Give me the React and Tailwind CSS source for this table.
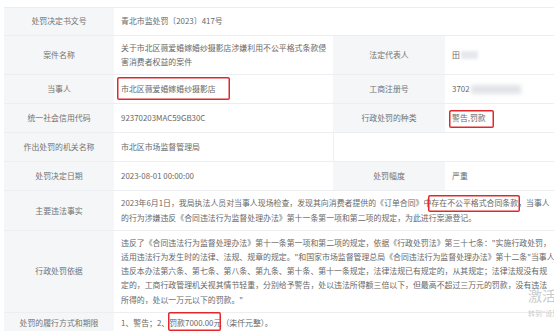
import React from 'react';

const Label = ({ children, className = 'min-h-[29px]' }) => (
  <div className={`flex items-center justify-center text-center bg-[#f5f6f7] border-b border-[#eceef1] text-[#737373] px-1 ${className}`}>
    {children}
  </div>
);

const Value = ({ children, className = '', pad = 'py-[5px] min-h-[29px]' }) => (
  <div className={`flex items-center bg-white border-b border-[#eceef1] text-[#686868] px-[7px] ${pad} ${className}`}>
    <div>{children}</div>
  </div>
);

// red annotation rectangle drawn over a piece of text
const Mark = ({ children, box }) => (
  <span className="relative inline-block">
    {children}
    <span className={`absolute rounded-[2px] shadow-[inset_0_0_0_1.5px_#e3262c] pointer-events-none ${box}`} />
  </span>
);

const Line = ({ children }) => <div className="whitespace-nowrap">{children}</div>;

export default function App() {
  return (
    <div className="relative w-[554px] h-[331px] overflow-hidden bg-white font-['Noto_Sans_CJK_SC',sans-serif] text-[7.9px] leading-[14.2px]">
      <div className="ml-[4px] mt-[7px] w-[556px] grid grid-cols-[110px_219px_112px_1fr] border-t border-[#eceef1]">
        <Label className="min-h-[28px]">处罚决定书文号</Label>
        <Value className="col-span-3" pad="py-[5px] min-h-[28px]">青北市监处罚〔2023〕417号</Value>

        <Label>案件名称</Label>
        <Value>
          <Line>关于市北区薇爱婚嫁婚纱摄影店涉嫌利用不公平格式条款侵</Line>
          <Line>害消费者权益的案件</Line>
        </Value>
        <Label>法定代表人</Label>
        <Value>
          <span className="inline-flex items-center">
            田<span className="inline-block w-[17px] h-[8px] bg-[#e6e8ec] blur-[1.5px] ml-[1px]" />
          </span>
        </Value>

        <Label>当事人</Label>
        <Value>
          <Mark box="left-[-4px] right-[-14px] top-[-5px] bottom-[-3px]">市北区薇爱婚嫁婚纱摄影店</Mark>
        </Value>
        <Label>工商注册号</Label>
        <Value>
          <span className="inline-flex items-center">
            3702<span className="inline-block w-[50px] h-[9px] bg-[#e1e3e8] blur-[2px] ml-[1px]" />
          </span>
        </Value>

        <Label>统一社会信用代码</Label>
        <Value>92370203MAC59GB30C</Value>
        <Label>行政处罚的种类</Label>
        <Value>
          <Mark box="left-[-3px] right-[-8px] top-[-1px] bottom-[-2px]">警告,罚款</Mark>
        </Value>

        <Label>作出处罚的机关名称</Label>
        <Value>市北区市场监督管理局</Value>
        <Value className="col-span-2 border-l" />

        <Label>处罚决定日期</Label>
        <Value>2023-08-01 00:00:00</Value>
        <Label>处罚幅度</Label>
        <Value>严重</Value>

        <Label>主要违法事实</Label>
        <Value className="col-span-3">
          <Line>
            2023年6月1日，我局执法人员对当事人现场检查，发现其向消费者提供的《订单合同》中
            <Mark box="left-[-3px] right-[-2px] top-[-1px] bottom-[-1px]">存在不公平格式合同条款</Mark>
            ，当事人
          </Line>
          <Line>的行为涉嫌违反《合同违法行为监督处理办法》第十一条第一项和第二项的规定，为此进行案源登记。</Line>
        </Value>

        <Label>行政处罚依据</Label>
        <Value className="col-span-3">
          <Line>违反了《合同违法行为监督处理办法》第十一条第一项和第二项的规定，依据《行政处罚法》第三十七条："实施行政处罚，</Line>
          <Line>适用违法行为发生时的法律、法规、规章的规定。"和国家市场监督管理总局《合同违法行为监督处理办法》第十二条"当事人</Line>
          <Line>违反本办法第六条、第七条、第八条、第九条、第十条、第十一条规定，法律法规已有规定的，从其规定；法律法规没有规</Line>
          <Line>定的，工商行政管理机关视其情节轻重，分别给予警告，处以违法所得额三倍以下，但最高不超过三万元的罚款，没有违法</Line>
          <Line>所得的，处以一万元以下的罚款。"</Line>
        </Value>

        <Label className="py-[3px]">处罚的履行方式和期限</Label>
        <Value className="col-span-3" pad="py-[3px]">
          1、警告；2、
          <Mark box="left-[-1px] right-[0px] top-[-4px] bottom-[-1px]">罚款7000.00元</Mark>
          （柒仟元整）。
        </Value>
      </div>

      {/* Windows activation watermark */}
      <div className="absolute left-[528px] top-[285px] text-[#cbcbcb] whitespace-nowrap pointer-events-none">
        <div className="text-[14px] leading-[20px]">激活 Windows</div>
        <div className="text-[7px] leading-[10px] mt-[3px]">转到"设置"以激活 Windows。</div>
      </div>
    </div>
  );
}
